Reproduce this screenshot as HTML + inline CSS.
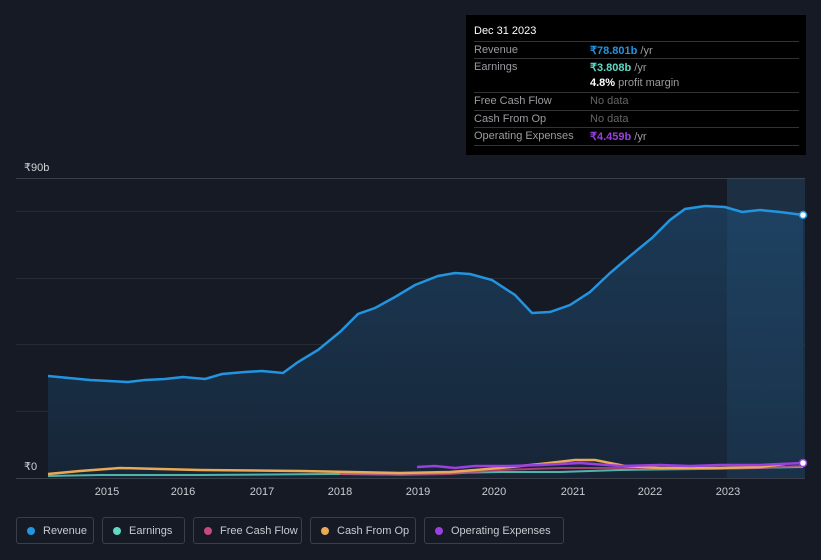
<!DOCTYPE html>
<html><head><meta charset="utf-8"><style>
body{margin:0;width:821px;height:560px;background:#151a24;font-family:"Liberation Sans",sans-serif;overflow:hidden;position:relative}
.tt{position:absolute;left:466px;top:15px;width:340px;height:140px;background:#000;color:#fff;font-size:11px}
.tt .h{position:absolute;left:8px;top:10px;font-size:11px}
.row{position:absolute;left:8px;width:325px;height:17px;border-top:1px solid #333;color:#9a9ca0}
.row span{position:absolute;left:116px;top:2px}
.row b{font-weight:normal;position:absolute;left:0;top:2px}
.leg{position:absolute;top:517px;height:27px;border:1px solid #3a3f4a;border-radius:3px;color:#c8cbd1;font-size:11px;line-height:27px;box-sizing:border-box;padding-left:26px}
.leg i{position:absolute;left:10px;top:9px;width:8px;height:8px;border-radius:50%}
</style></head><body>
<svg width="821" height="560" style="position:absolute;left:0;top:0">
<defs><linearGradient id="g" x1="0" y1="0" x2="0" y2="1"><stop offset="0" stop-color="#1b3a57"/><stop offset="1" stop-color="#172536"/></linearGradient></defs>
<rect x="727" y="178" width="78" height="300" fill="#1a2330"/>
<line x1="16" y1="178.5" x2="805" y2="178.5" stroke="#3a3f4a"/>
<g stroke="#262b35"><line x1="16" y1="211.5" x2="805" y2="211.5"/><line x1="16" y1="278.5" x2="805" y2="278.5"/><line x1="16" y1="344.5" x2="805" y2="344.5"/><line x1="16" y1="411.5" x2="805" y2="411.5"/></g>
<path d="M48,376 L90,380 L128,382 L145,380 L165,379 L183,377 L205,379 L222,374 L245,372 L262,371 L283,373 L298,362 L318,350 L340,332 L358,314 L375,308 L395,297 L415,285 L438,276 L455,273 L470,274 L492,280 L515,295 L532,313 L550,312 L570,305 L590,292 L610,273 L630,256 L652,238 L670,220 L685,209 L705,206 L725,207 L742,212 L760,210 L780,212 L803,215 L803,478 L48,478Z" fill="url(#g)"/>
<rect x="727" y="178" width="78" height="300" fill="#2a6a9a" opacity="0.18"/>
<path d="M48,376 L90,380 L128,382 L145,380 L165,379 L183,377 L205,379 L222,374 L245,372 L262,371 L283,373 L298,362 L318,350 L340,332 L358,314 L375,308 L395,297 L415,285 L438,276 L455,273 L470,274 L492,280 L515,295 L532,313 L550,312 L570,305 L590,292 L610,273 L630,256 L652,238 L670,220 L685,209 L705,206 L725,207 L742,212 L760,210 L780,212 L803,215" fill="none" stroke="#2394df" stroke-width="2.5"/>
<path d="M48,476 L100,475 L200,475 L330,474 L400,474 L500,472 L560,472 L620,470 L700,469 L803,467" fill="none" stroke="#5fd9c4" stroke-width="2" opacity="0.8"/>
<path d="M340,474 L400,475 L450,474 L500,470 L560,468 L620,468 L700,469 L760,468 L803,466" fill="none" stroke="#c34a7b" stroke-width="2" opacity="0.8"/>
<path d="M48,474 L80,471 L120,468 L160,469 L200,470 L300,471 L400,473 L450,472 L500,468 L540,464 L575,460 L595,460 L625,466 L660,468 L720,468 L760,467 L785,464" fill="none" stroke="#e9a956" stroke-width="2.5"/>
<path d="M417,467 L435,466 L455,468 L475,466 L510,466 L540,465 L580,463 L620,466 L660,465 L690,466 L720,465 L760,465 L780,464 L803,463" fill="none" stroke="#9a3fe0" stroke-width="2.5"/>
<circle cx="803" cy="215" r="3.5" fill="#fff" stroke="#2394df" stroke-width="1.5"/>
<circle cx="803" cy="463" r="3.5" fill="#fff" stroke="#9a3fe0" stroke-width="1.5"/>
<line x1="16" y1="478.5" x2="805" y2="478.5" stroke="#3a3f4a"/>
<g fill="#c8cbd1" font-size="11" font-family="Liberation Sans" text-anchor="middle">
<text x="107" y="495">2015</text><text x="183" y="495">2016</text><text x="262" y="495">2017</text><text x="340" y="495">2018</text><text x="418" y="495">2019</text><text x="494" y="495">2020</text><text x="573" y="495">2021</text><text x="650" y="495">2022</text><text x="728" y="495">2023</text></g>
<text x="24" y="171" fill="#d0d3d8" font-size="11" font-family="Liberation Sans">₹90b</text>
<text x="24" y="470" fill="#d0d3d8" font-size="11" font-family="Liberation Sans">₹0</text>
</svg>
<div class="tt"><div class="h">Dec 31 2023</div>
<div class="row" style="top:26px"><b>Revenue</b><span><em style="font-style:normal;color:#2394df;font-weight:bold">₹78.801b</em> /yr</span></div>
<div class="row" style="top:43px"><b>Earnings</b><span><em style="font-style:normal;color:#5fd9c4;font-weight:bold">₹3.808b</em> /yr</span></div>
<div class="row" style="top:60px;border-top:none"><span><em style="font-style:normal;color:#fff;font-weight:bold">4.8%</em> profit margin</span></div>
<div class="row" style="top:77px"><b>Free Cash Flow</b><span style="color:#666">No data</span></div>
<div class="row" style="top:95px"><b>Cash From Op</b><span style="color:#666">No data</span></div>
<div class="row" style="top:112px;border-bottom:1px solid #333"><b>Operating Expenses</b><span><em style="font-style:normal;color:#9a3fe0;font-weight:bold">₹4.459b</em> /yr</span></div>
</div>
<div class="leg" style="left:16px;width:78px"><i style="background:#2394df"></i>Revenue</div>
<div class="leg" style="left:102px;width:83px"><i style="background:#5fd9c4"></i>Earnings</div>
<div class="leg" style="left:193px;width:109px"><i style="background:#c34a7b"></i>Free Cash Flow</div>
<div class="leg" style="left:310px;width:106px"><i style="background:#e9a956"></i>Cash From Op</div>
<div class="leg" style="left:424px;width:140px"><i style="background:#9a3fe0"></i>Operating Expenses</div>
</body></html>
